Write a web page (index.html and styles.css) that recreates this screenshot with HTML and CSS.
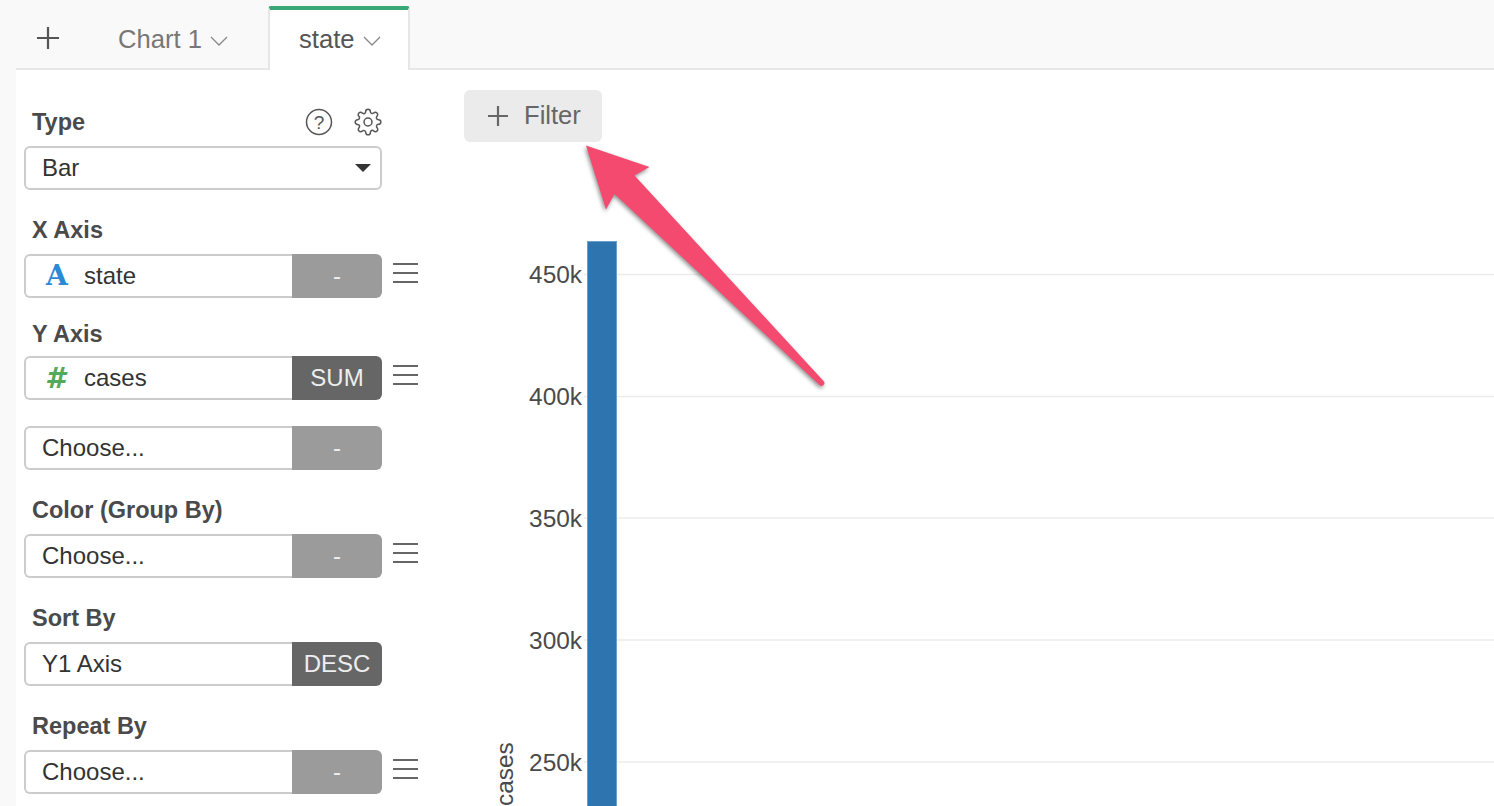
FILE: index.html
```html
<!doctype html>
<html>
<head>
<meta charset="utf-8">
<title>Chart</title>
<link rel="stylesheet" href="styles.css">
</head>
<body>
<div class="page">
	<div class="tabbar">
		<svg class="tab-add" width="24" height="24" viewBox="0 0 24 24"><path d="M12 1v22M1 12h22"/></svg>
		<div class="tab">Chart 1 <svg class="caret" width="18" height="10" viewBox="0 0 18 10"><path d="M1 1l8 8 8-8"/></svg></div>
		<div class="tab active">state <svg class="caret" width="18" height="10" viewBox="0 0 18 10"><path d="M1 1l8 8 8-8"/></svg></div>
	</div>
	<div class="body">
		<div class="side">
			<div class="group">
				<div class="label">
					<span>Type</span>
					<svg class="ico-help" width="28" height="28" viewBox="0 0 28 28"><circle cx="14" cy="14" r="12.5"/><text x="14" y="21" text-anchor="middle">?</text></svg>
					<svg class="ico-gear" width="28" height="28" viewBox="0 0 24 24"><circle cx="12" cy="12" r="3.4"/><path d="M19.4 15a1.65 1.65 0 0 0 .33 1.82l.06.06a2 2 0 0 1 0 2.83 2 2 0 0 1-2.83 0l-.06-.06a1.65 1.65 0 0 0-1.82-.33 1.65 1.65 0 0 0-1 1.51V21a2 2 0 0 1-2 2 2 2 0 0 1-2-2v-.09A1.65 1.65 0 0 0 9 19.4a1.65 1.65 0 0 0-1.82.33l-.06.06a2 2 0 0 1-2.83 0 2 2 0 0 1 0-2.83l.06-.06a1.65 1.65 0 0 0 .33-1.82 1.65 1.65 0 0 0-1.51-1H3a2 2 0 0 1-2-2 2 2 0 0 1 2-2h.09A1.65 1.65 0 0 0 4.6 9a1.65 1.65 0 0 0-.33-1.82l-.06-.06a2 2 0 0 1 0-2.83 2 2 0 0 1 2.83 0l.06.06a1.65 1.65 0 0 0 1.82.33H9a1.65 1.65 0 0 0 1-1.51V3a2 2 0 0 1 2-2 2 2 0 0 1 2 2v.09a1.65 1.65 0 0 0 1 1.51 1.65 1.65 0 0 0 1.82-.33l.06-.06a2 2 0 0 1 2.83 0 2 2 0 0 1 0 2.83l-.06.06a1.65 1.65 0 0 0-.33 1.82V9a1.65 1.65 0 0 0 1.51 1H21a2 2 0 0 1 2 2 2 2 0 0 1-2 2h-.09a1.65 1.65 0 0 0-1.51 1z"/></svg>
				</div>
				<div class="select">Bar<i class="select-arrow"></i></div>
			</div>
			<div class="group tight">
				<div class="label">X Axis</div>
				<div class="row">
					<div class="field"><span class="type-a">A</span>state</div><div class="agg off">-</div>
					<div class="menu"><b></b><b></b><b></b></div>
				</div>
			</div>
			<div class="group near">
				<div class="label">Y Axis</div>
				<div class="row">
					<div class="field"><span class="type-n">#</span>cases</div><div class="agg">SUM</div>
					<div class="menu"><b></b><b></b><b></b></div>
				</div>
				<div class="row second">
					<div class="field">Choose...</div><div class="agg off">-</div>
				</div>
			</div>
			<div class="group">
				<div class="label">Color (Group By)</div>
				<div class="row">
					<div class="field">Choose...</div><div class="agg off">-</div>
					<div class="menu"><b></b><b></b><b></b></div>
				</div>
			</div>
			<div class="group">
				<div class="label">Sort By</div>
				<div class="row">
					<div class="field">Y1 Axis</div><div class="agg">DESC</div>
				</div>
			</div>
			<div class="group">
				<div class="label">Repeat By</div>
				<div class="row">
					<div class="field">Choose...</div><div class="agg off">-</div>
					<div class="menu"><b></b><b></b><b></b></div>
				</div>
			</div>
		</div>
		<div class="main">
			<div class="filter"><svg width="22" height="22" viewBox="0 0 22 22"><path d="M11 1v20M1 11h20"/></svg><span>Filter</span></div>
			<svg class="chart" width="1044" height="604" viewBox="0 0 1044 604">
				<g class="grid">
					<path d="M134 72.500H1044M134 194.500H1044M134 316H1044M134 438H1044M134 560H1044"/>
				</g>
				<g class="ticks">
					<text x="132" y="81">450k</text>
					<text x="132" y="203">400k</text>
					<text x="132" y="325">350k</text>
					<text x="132" y="447">300k</text>
					<text x="132" y="569">250k</text>
				</g>
				<rect class="bar" x="137.500" y="39.500" width="29" height="570"/>
				<text class="axis-title" transform="translate(63 604) rotate(-90)">cases</text>
			</svg>
		</div>
	</div>
	<svg class="pointer" width="260" height="260" viewBox="580 140 260 260">
		<path d="M586 145.500L649.500 167L634.500 175.500L823.500 381A2.200 2.200 0 0 1 819.500 385L614.500 194L606 209.500Z"/>
	</svg>
</div>
</body>
</html>
```

FILE: styles.css
```css
html, body {
	margin: 0;
	background: #fff;
}
.page {
	position: relative;
	width: 1494px;
	height: 806px;
	overflow: hidden;
	background: #f9f9f9;
	font-family: "Liberation Sans", Arial, sans-serif;
	color: #444;
}
.tabbar {
	display: flex;
	align-items: flex-end;
	height: 68px;
	margin-left: 16px;
	border-bottom: 2px solid #e8e8e8;
}
.tab-add {
	margin: 0 0 18px 20px;
	stroke: #555;
	stroke-width: 2.200;
	fill: none;
}
.tab {
	box-sizing: border-box;
	height: 64px;
	padding: 18px 0 0;
	font-size: 25.600px;
	line-height: 34px;
	color: #777;
	margin-left: 58px;
	width: 150px;
	white-space: nowrap;
}
.tab.active {
	width: 142px;
	margin: 0 0 -2px 0;
	padding: 12px 0 0 29px;
	color: #555;
	background: #fff;
	border: 2px solid #e6e6e6;
	border-top: 4px solid #3aa876;
	border-bottom: 0;
	border-radius: 3px 3px 0 0;
}
.caret {
	margin-left: 1px;
	vertical-align: 2px;
	fill: none;
	stroke: #888;
	stroke-width: 1.300;
}
.body {
	display: flex;
	height: 736px;
}
.side {
	box-sizing: border-box;
	width: 434px;
	margin-left: 16px;
	padding: 40px 0 0 8px;
	background: #fff;
}
.main {
	flex: 1;
	background: #fff;
}
.group {
	margin-bottom: 28px;
}
.group.tight {
	margin-bottom: 24px;
}
.label {
	display: flex;
	align-items: center;
	height: 24px;
	width: 350px;
	margin: 0 0 12px 8px;
	font-size: 23.500px;
	font-weight: bold;
	color: #4a4a4a;
}
.near .label {
	margin-bottom: 10px;
}
.label span {
	flex: 1;
}
.ico-help {
	margin-right: 21px;
	fill: none;
	stroke: #555;
	stroke-width: 1.500;
}
.ico-help text {
	font-size: 19px;
	font-weight: normal;
	fill: #555;
	stroke: none;
}
.ico-gear {
	fill: none;
	stroke: #555;
	stroke-width: 1.300;
}
.select {
	display: flex;
	align-items: center;
	justify-content: space-between;
	box-sizing: border-box;
	width: 358px;
	height: 44px;
	padding: 0 9px 0 16px;
	border: 2px solid #ccc;
	border-radius: 6px;
	font-size: 24px;
	color: #333;
}
.select-arrow {
	width: 0;
	height: 0;
	border-left: 8px solid transparent;
	border-right: 8px solid transparent;
	border-top: 8px solid #333;
}
.row {
	display: flex;
	height: 44px;
	font-size: 24px;
}
.row.second {
	margin-top: 26px;
}
.field {
	box-sizing: border-box;
	display: flex;
	align-items: center;
	width: 268px;
	padding-left: 16px;
	border: 2px solid #ccc;
	border-right: 0;
	border-radius: 6px 0 0 6px;
	color: #333;
}
.type-a, .type-n {
	width: 42px;
	flex: none;
	padding-left: 4px;
	box-sizing: border-box;
	font-weight: bold;
	font-family: "DejaVu Serif", serif;
	font-size: 28px;
	line-height: 34px;
	color: #2a8ad4;
}
.type-n {
	padding-left: 3px;
	font-family: "DejaVu Sans", sans-serif;
	font-style: italic;
	font-size: 29px;
	color: #55a95b;
}
.agg {
	width: 90px;
	line-height: 44px;
	text-align: center;
	background: #666;
	color: #eee;
	border-radius: 0 6px 6px 0;
}
.agg.off {
	background: #9b9b9b;
}
.menu {
	display: flex;
	flex-direction: column;
	justify-content: space-between;
	width: 25px;
	height: 20px;
	margin: 9px 0 0 11px;
}
.menu b {
	height: 2px;
	background: #666;
}
.filter {
	display: flex;
	align-items: center;
	box-sizing: border-box;
	width: 138px;
	height: 52px;
	margin: 20px 0 0 14px;
	padding-left: 23px;
	background: #ebebeb;
	border-radius: 6px;
	font-size: 25.600px;
	color: #666;
}
.filter svg {
	margin-right: 15px;
	stroke: #666;
	stroke-width: 2.200;
	fill: none;
}
.filter span {
	margin-bottom: 2px;
}
.chart {
	display: block;
	margin-top: 60px;
}
.grid path {
	stroke: #ececec;
	stroke-width: 1.500;
	fill: none;
}
.ticks text {
	font-size: 24.400px;
	fill: #4a4a4a;
	text-anchor: end;
}
.bar {
	fill: #2e75b0;
	stroke: #6a9ecb;
	stroke-width: 1;
}
.axis-title {
	font-size: 24.400px;
	fill: #4a4a4a;
}
.pointer {
	position: absolute;
	left: 580px;
	top: 140px;
	overflow: visible;
	filter: drop-shadow(-1px 2px 2px rgba(0, 0, 0, 0.45));
}
.pointer path {
	fill: #f54a70;
}
```
